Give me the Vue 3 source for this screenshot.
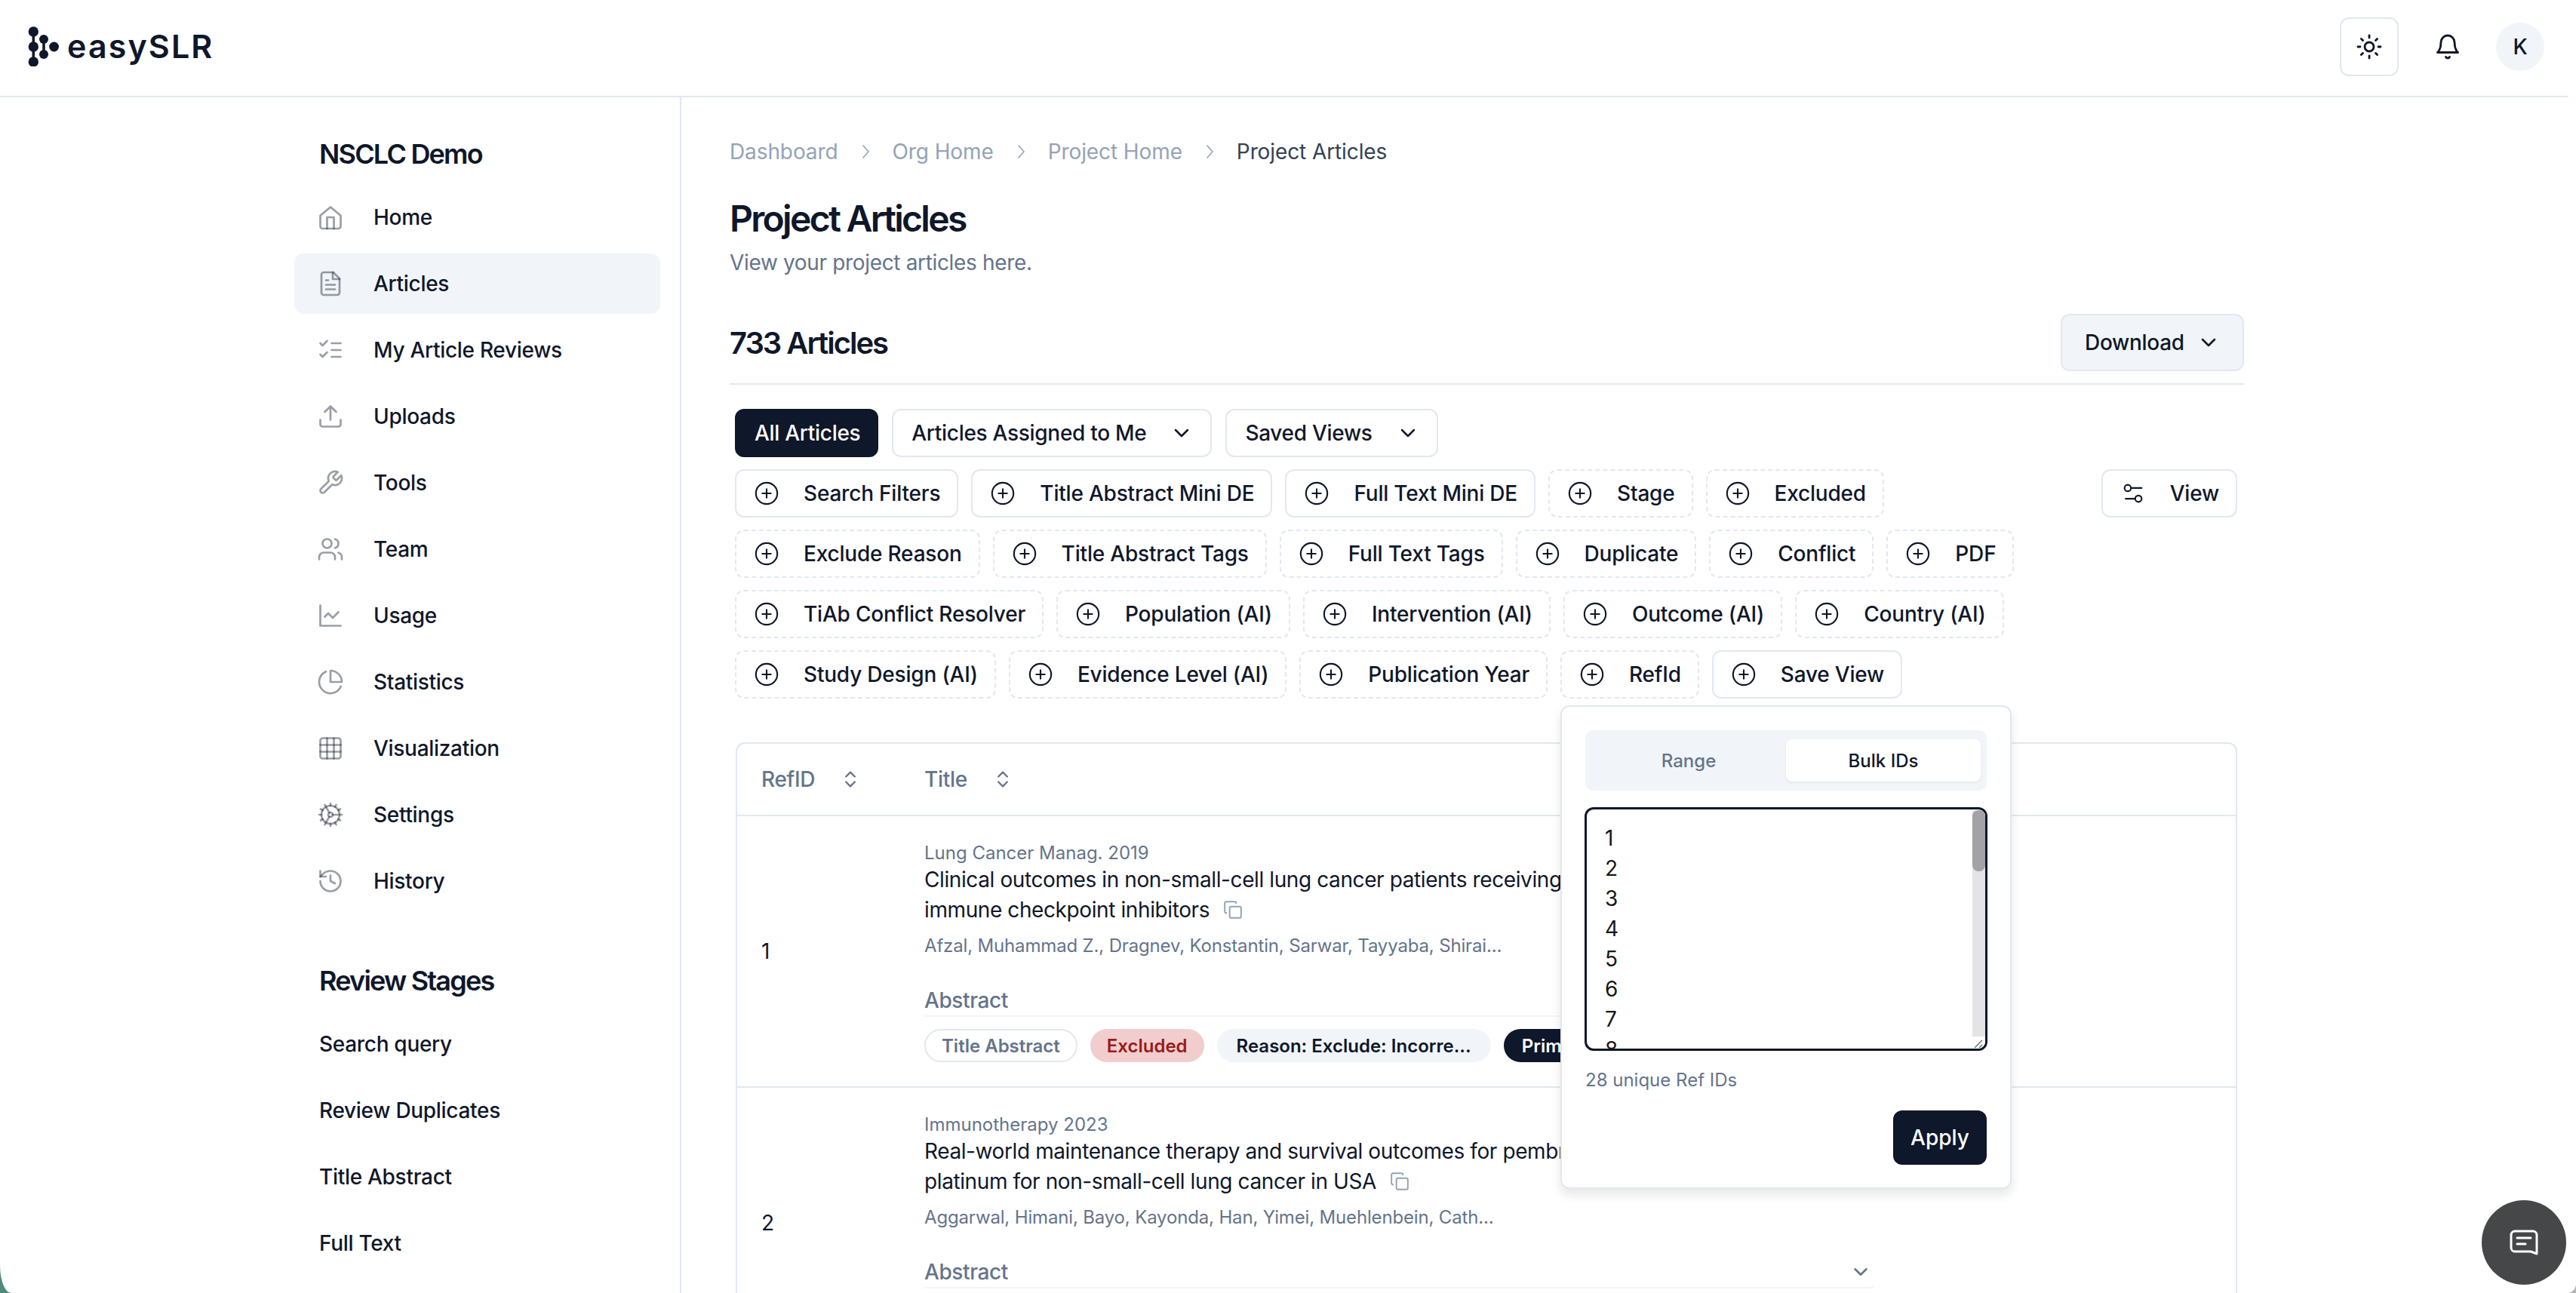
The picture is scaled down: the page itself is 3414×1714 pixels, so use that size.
<script setup>
const navItems = [
  { label: 'Home', icon: 'home' },
  { label: 'Articles', icon: 'file', active: true },
  { label: 'My Article Reviews', icon: 'checks' },
  { label: 'Uploads', icon: 'upload' },
  { label: 'Tools', icon: 'wrench' },
  { label: 'Team', icon: 'users' },
  { label: 'Usage', icon: 'chart' },
  { label: 'Statistics', icon: 'pie' },
  { label: 'Visualization', icon: 'grid' },
  { label: 'Settings', icon: 'cog' },
  { label: 'History', icon: 'history' },
]
const stages = ['Search query', 'Review Duplicates', 'Title Abstract', 'Full Text']
const crumbs = ['Dashboard', 'Org Home', 'Project Home']
const filters = [
  { label: 'Search Filters', solid: true },
  { label: 'Title Abstract Mini DE', solid: true },
  { label: 'Full Text Mini DE', solid: true },
  { label: 'Stage' },
  { label: 'Excluded' },
  { label: 'Exclude Reason' },
  { label: 'Title Abstract Tags' },
  { label: 'Full Text Tags' },
  { label: 'Duplicate' },
  { label: 'Conflict' },
  { label: 'PDF' },
  { label: 'TiAb Conflict Resolver' },
  { label: 'Population (AI)' },
  { label: 'Intervention (AI)' },
  { label: 'Outcome (AI)' },
  { label: 'Country (AI)' },
  { label: 'Study Design (AI)' },
  { label: 'Evidence Level (AI)' },
  { label: 'Publication Year' },
  { label: 'RefId' },
  { label: 'Save View', solid: true },
]
const rows = [
  {
    id: 1,
    journal: 'Lung Cancer Manag. 2019',
    line1: 'Clinical outcomes in non-small-cell lung cancer patients receiving',
    line2: 'immune checkpoint inhibitors',
    authors: 'Afzal, Muhammad Z., Dragnev, Konstantin, Sarwar, Tayyaba, Shirai...',
    badges: true,
  },
  {
    id: 2,
    journal: 'Immunotherapy 2023',
    line1: 'Real-world maintenance therapy and survival outcomes for pembrolizumab',
    line2: 'platinum for non-small-cell lung cancer in USA',
    authors: 'Aggarwal, Himani, Bayo, Kayonda, Han, Yimei, Muehlenbein, Cath...',
    badges: false,
  },
]
const ids = [1, 2, 3, 4, 5, 6, 7, 8]
</script>

<template>
  <div class="app">
    <header class="topbar">
      <div class="logo">
        <svg class="logo-mark" width="41" height="53" viewBox="0 0 41 53" fill="#0f172a">
          <path d="M7.3 7V47" stroke="#0f172a" stroke-width="3.5" />
          <path d="M21 17V37" stroke="#0f172a" stroke-width="3.5" />
          <circle cx="7.3" cy="7" r="6.7" />
          <circle cx="7.3" cy="27" r="6.7" />
          <circle cx="7.3" cy="47" r="6.7" />
          <circle cx="21" cy="17" r="6" />
          <circle cx="21" cy="37" r="6" />
          <circle cx="34.6" cy="27" r="6.4" />
        </svg>
        <span class="logo-text">easySLR</span>
      </div>
      <div class="top-actions">
        <button class="theme-btn">
          <svg class="ico dark" width="36" height="36" viewBox="0 0 24 24">
            <circle cx="12" cy="12" r="4" />
            <path d="M12 2v2M12 20v2M4.93 4.93l1.41 1.41M17.66 17.66l1.41 1.41M2 12h2M20 12h2M6.34 17.66l-1.41 1.41M19.07 4.93l-1.41 1.41" />
          </svg>
        </button>
        <svg class="ico dark bell" width="36" height="36" viewBox="0 0 24 24">
          <path d="M6 8a6 6 0 0 1 12 0c0 7 3 9 3 9H3s3-2 3-9" />
          <path d="M10.3 21a1.94 1.94 0 0 0 3.4 0" />
        </svg>
        <div class="avatar">K</div>
      </div>
    </header>

    <div class="body">
      <aside class="sidebar">
        <h2 class="side-title">NSCLC Demo</h2>
        <nav class="nav">
          <a v-for="item in navItems" :key="item.label" class="nav-item" :class="{ active: item.active }">
            <svg class="ico gray" width="36" height="36" viewBox="0 0 24 24">
              <template v-if="item.icon === 'home'">
                <path d="M3 10.5 12 3l9 7.5V20a2 2 0 0 1-2 2H5a2 2 0 0 1-2-2z" /><path d="M9 22V12h6v10" />
              </template>
              <template v-else-if="item.icon === 'file'">
                <path d="M14.5 2H6a2 2 0 0 0-2 2v16a2 2 0 0 0 2 2h12a2 2 0 0 0 2-2V7.5z" /><path d="M14 2v6h6" /><path d="M16 13H8" /><path d="M16 17H8" /><path d="M10 9H8" />
              </template>
              <template v-else-if="item.icon === 'checks'">
                <path d="m3 6 2 2 4-4M3 16l2 2 4-4" /><path d="M13 6h8M13 12h8M13 18h8" />
              </template>
              <template v-else-if="item.icon === 'upload'">
                <path d="M21 15v4a2 2 0 0 1-2 2H5a2 2 0 0 1-2-2v-4" /><path d="M17 8l-5-5-5 5M12 3v12" />
              </template>
              <template v-else-if="item.icon === 'wrench'">
                <path d="M14.7 6.3a1 1 0 0 0 0 1.4l1.6 1.6a1 1 0 0 0 1.4 0l3.77-3.77a6 6 0 0 1-7.94 7.94l-6.91 6.91a2.12 2.12 0 0 1-3-3l6.91-6.91a6 6 0 0 1 7.94-7.94l-3.76 3.76z" />
              </template>
              <template v-else-if="item.icon === 'users'">
                <path d="M16 21v-2a4 4 0 0 0-4-4H6a4 4 0 0 0-4 4v2" /><circle cx="9" cy="7" r="4" /><path d="M22 21v-2a4 4 0 0 0-3-3.87M16 3.13a4 4 0 0 1 0 7.75" />
              </template>
              <template v-else-if="item.icon === 'chart'">
                <path d="M3 3v18h18" /><path d="m19 9-5 5-4-4-3 3" />
              </template>
              <template v-else-if="item.icon === 'pie'">
                <path d="M21.21 15.89A10 10 0 1 1 8 2.83" /><path d="M22 12A10 10 0 0 0 12 2v10z" />
              </template>
              <template v-else-if="item.icon === 'grid'">
                <rect x="3" y="3" width="18" height="18" rx="2" /><path d="M9 3v18" /><path d="M15 3v18" /><path d="M3 9h18" /><path d="M3 15h18" />
              </template>
              <template v-else-if="item.icon === 'cog'">
                <circle cx="12" cy="12" r="8" /><circle cx="12" cy="12" r="2" />
                <path d="M12 2v2M12 22v-2M17 20.66l-1-1.73M11 10.27 7 3.34M20.66 17l-1.73-1M3.34 7l1.73 1M14 12h8M2 12h2M20.66 7l-1.73 1M3.34 17l1.73-1M17 3.34l-1 1.73M11 13.73l-4 6.93" />
              </template>
              <template v-else-if="item.icon === 'history'">
                <path d="M3 12a9 9 0 1 0 9-9 9.75 9.75 0 0 0-6.74 2.74L3 8" /><path d="M3 3v5h5" /><path d="M12 7v5l4 2" />
              </template>
            </svg>
            <span>{{ item.label }}</span>
          </a>
        </nav>
        <h2 class="side-title stages-title">Review Stages</h2>
        <nav class="nav">
          <a v-for="s in stages" :key="s" class="nav-item plain">{{ s }}</a>
        </nav>
      </aside>

      <main class="main">
        <div class="crumbs">
          <template v-for="c in crumbs" :key="c">
            <span class="crumb">{{ c }}</span>
            <svg class="ico crumb-sep" width="24" height="24" viewBox="0 0 24 24"><path d="m9 4 7 8-7 8" /></svg>
          </template>
          <span class="crumb current">Project Articles</span>
        </div>
        <h1 class="page-title">Project Articles</h1>
        <p class="page-sub">View your project articles here.</p>

        <div class="count-row">
          <h2 class="count">733 Articles</h2>
          <button class="download">
            Download
            <svg class="ico dark chev" width="32" height="32" viewBox="0 0 24 24"><path d="m6 9 6 6 6-6" /></svg>
          </button>
        </div>

        <section class="content">
          <div class="tabs">
            <button class="tab primary">All Articles</button>
            <button class="tab">
              Articles Assigned to Me
              <svg class="ico dark chev" width="32" height="32" viewBox="0 0 24 24"><path d="m6 9 6 6 6-6" /></svg>
            </button>
            <button class="tab">
              Saved Views
              <svg class="ico dark chev" width="32" height="32" viewBox="0 0 24 24"><path d="m6 9 6 6 6-6" /></svg>
            </button>
          </div>

          <div class="filter-area">
            <div class="filters">
              <button v-for="f in filters" :key="f.label" class="chip" :class="{ solid: f.solid }">
                <svg class="ico dark plus" width="34" height="34" viewBox="0 0 24 24">
                  <circle cx="12" cy="12" r="10" /><path d="M8 12h8M12 8v8" />
                </svg>
                {{ f.label }}
              </button>
            </div>
            <button class="chip solid view-btn">
              <svg class="ico dark plus" width="34" height="34" viewBox="0 0 24 24">
                <path d="M20 7h-9M14 17H5" /><circle cx="17" cy="17" r="3" /><circle cx="7" cy="7" r="3" />
              </svg>
              View
            </button>

            <div class="popover">
              <div class="seg">
                <div class="seg-item">Range</div>
                <div class="seg-item on">Bulk IDs</div>
              </div>
              <div class="idbox">
                <div v-for="n in ids" :key="n" class="idline">{{ n }}</div>
                <div class="sb-track"><div class="sb-thumb"></div></div>
                <svg class="grip" width="18" height="16" viewBox="0 0 18 16"><path d="M4 15 14 5M10 15l4-4" /></svg>
              </div>
              <div class="unique">28 unique Ref IDs</div>
              <div class="apply-row"><button class="apply">Apply</button></div>
            </div>
          </div>

          <div class="table">
            <div class="thead">
              <div class="col-id th">
                RefID
                <svg class="ico slate" width="28" height="28" viewBox="0 0 24 24"><path d="m7 15 5 5 5-5M7 9l5-5 5 5" /></svg>
              </div>
              <div class="col-title th">
                Title
                <svg class="ico slate" width="28" height="28" viewBox="0 0 24 24"><path d="m7 15 5 5 5-5M7 9l5-5 5 5" /></svg>
              </div>
            </div>
            <div v-for="r in rows" :key="r.id" class="row">
              <div class="col-id num">{{ r.id }}</div>
              <div class="col-title cell">
                <div class="journal">{{ r.journal }}</div>
                <div class="art-title">{{ r.line1 }}</div>
                <div class="art-title">
                  {{ r.line2 }}
                  <svg class="ico copy" width="26" height="26" viewBox="0 0 24 24">
                    <rect x="8" y="8" width="14" height="14" rx="2" /><path d="M4 16c-1.1 0-2-.9-2-2V4c0-1.1.9-2 2-2h10c1.1 0 2 .9 2 2" />
                  </svg>
                </div>
                <div class="authors">{{ r.authors }}</div>
                <div class="abstract">
                  <span>Abstract</span>
                  <svg class="ico slate" width="30" height="30" viewBox="0 0 24 24"><path d="m6 9 6 6 6-6" /></svg>
                </div>
                <div class="badges">
                  <template v-if="r.badges">
                    <span class="badge outline">Title Abstract</span>
                    <span class="badge red">Excluded</span>
                    <span class="badge soft">Reason: Exclude: Incorre...</span>
                    <span class="badge ink">Primary</span>
                  </template>
                </div>
              </div>
            </div>
          </div>
        </section>
      </main>
    </div>

    <button class="chat">
      <svg width="38" height="34" viewBox="0 0 38 34" fill="none" stroke="#fff" stroke-width="3" stroke-linejoin="round" stroke-linecap="round">
        <path d="M7 2h24a5 5 0 0 1 5 5v25l-8-3H7a5 5 0 0 1-5-5V7a5 5 0 0 1 5-5z" />
        <path d="M10 11h18M10 19h11" />
      </svg>
    </button>
  </div>
</template>

<style>
html, body {
  margin: 0;
  background: linear-gradient(90deg, #4f8a7a 0 50%, #b4b4b4 50% 100%);
}
</style>

<style scoped>
* { box-sizing: border-box; }
.app {
  position: relative;
  width: 3414px;
  height: 1714px;
  overflow: hidden;
  background: #fff;
  color: #0f172a;
  font-family: Inter, "Liberation Sans", sans-serif;
  font-size: 28px;
  letter-spacing: -0.3px;
  border-radius: 0 0 12px 15px / 0 0 12px 37px;
}
button { font-family: inherit; font-size: inherit; color: inherit; background: none; cursor: pointer; letter-spacing: inherit; }
h1, h2, p { margin: 0; }
.ico { fill: none; stroke-linecap: round; stroke-linejoin: round; stroke-width: 2; flex: none; }
.ico.dark { stroke: #0f172a; }
.ico.gray { stroke: #0f172a; stroke-opacity: 0.42; stroke-width: 1.8; }
.ico.slate { stroke: #64748b; }
.ico.chev { stroke-width: 1.9; margin: 0 -2px; }
.ico.plus { stroke-width: 1.5; margin: 0 -2px; }

.topbar {
  width: 3404px;
  height: 129px;
  border-bottom: 2px solid #e2e8f0;
  display: flex;
  align-items: center;
  justify-content: space-between;
  padding: 0 32px 4px 37px;
}
.logo { display: flex; align-items: center; gap: 11px; }
.logo-text { font-size: 43px; font-weight: 600; letter-spacing: 2.1px; line-height: 53px; }
.top-actions { display: flex; align-items: center; }
.theme-btn {
  width: 78px; height: 78px;
  border: 2px solid #e2e8f0; border-radius: 12px;
  display: flex; align-items: center; justify-content: center;
  padding: 0;
}
.theme-btn .ico, .bell { stroke-width: 1.9; }
.bell { margin-left: 47px; }
.avatar {
  width: 64px; height: 64px; border-radius: 50%;
  background: #f1f5f9; margin-left: 46px;
  display: flex; align-items: center; justify-content: center;
  font-size: 28px; font-weight: 500;
}

.body { display: flex; height: 1585px; }
.sidebar {
  width: 903px;
  flex: none;
  border-right: 2px solid #e2e8f0;
  padding: 51px 26px 0 390px;
}
.side-title {
  font-size: 36px; font-weight: 600; letter-spacing: -1.8px;
  line-height: 48px; padding-left: 33px; margin-bottom: 20px;
}
.stages-title { margin-top: 68px; }
.nav { display: flex; flex-direction: column; gap: 8px; }
.nav-item {
  height: 80px; display: flex; align-items: center; gap: 39px;
  padding-left: 30px; border-radius: 12px; font-weight: 500;
}
.nav-item.plain { padding-left: 33px; }
.nav-item.active { background: #f1f5f9; }

.main { flex: 1; padding: 52px 440px 0 64px; min-width: 0; }
.crumbs { display: flex; align-items: center; height: 40px; color: #94a3b8; letter-spacing: -0.1px; }
.crumb-sep { stroke: #94a3b8; margin: 0 24px; stroke-width: 1.6; }
.crumb.current { color: #334155; }
.page-title {
  font-size: 48px; font-weight: 600; letter-spacing: -2.7px;
  line-height: 60px; margin-top: 39px;
}
.page-sub { color: #64748b; line-height: 40px; margin-top: 8px; letter-spacing: -0.34px; }
.count-row {
  display: flex; align-items: center; justify-content: space-between;
  margin-top: 48px; padding-bottom: 16px; border-bottom: 2px solid #e2e8f0;
}
.count { font-size: 40px; font-weight: 600; letter-spacing: -2px; }
.download {
  height: 76px; width: 243px;
  background: #f1f5f9; border: 2px solid #e2e8f0; border-radius: 12px;
  display: flex; align-items: center; gap: 18px;
  font-weight: 500; padding: 0 0 0 30px;
}

.content { padding: 32px 9px 0 7px; }
.tabs { display: flex; gap: 18px; }
.tab {
  height: 64px; display: flex; align-items: center; gap: 33px;
  padding: 0 24px; border: 2px solid #e2e8f0; border-radius: 12px; font-weight: 500;
}
.tab.primary { background: #0f172a; border-color: #0f172a; color: #fff; padding: 0 22px 0 24px; }

.filter-area { position: relative; display: flex; justify-content: space-between; align-items: flex-start; margin-top: 16px; }
.filters { display: flex; flex-wrap: wrap; gap: 16px 17px; width: 1790px; }
.chip {
  height: 64px; display: flex; align-items: center; gap: 34px;
  padding: 0 22px 0 25px; border: 2px dashed #e2e8f0; border-radius: 12px; font-weight: 500;
  letter-spacing: -0.2px;
}
.chip.solid { border-style: solid; }

.popover {
  position: absolute; left: 1094px; top: 313px;
  width: 598px; height: 641px;
  background: #fff; border: 2px solid #e2e8f0; border-radius: 12px;
  box-shadow: 0 8px 14px rgba(15, 23, 42, 0.1);
  padding: 31px 31px 0;
  z-index: 5;
  letter-spacing: 0;
}
.seg {
  height: 80px; background: #f1f5f9; border-radius: 10px;
  display: flex; padding: 12px 8px;
}
.seg-item {
  flex: 1; display: flex; align-items: center; justify-content: center;
  font-size: 24px; font-weight: 500; color: #64748b; border-radius: 8px;
}
.seg-item.on { background: #fff; color: #0f172a; box-shadow: 0 1px 3px rgba(15, 23, 42, 0.08); }
.idbox {
  position: relative; height: 323px; margin: 22px -1px 0; overflow: hidden;
  border: 3px solid #0f172a; border-radius: 12px;
  padding: 18px 24px 0;
}
.idline { line-height: 40px; font-size: 28px; color: #171717; }
.sb-track { position: absolute; top: 1px; right: 0; width: 17px; height: 304px; background: #e4e4e6; }
.sb-thumb { width: 17px; height: 81px; background: #a3a3a5; border-radius: 8px; }
.grip { position: absolute; right: 0; bottom: 0; fill: none; stroke: #666; stroke-width: 1.4; background: #fff; }
.unique { font-size: 24px; color: #64748b; line-height: 32px; margin-top: 23px; }
.apply-row { display: flex; justify-content: flex-end; margin-top: 24px; }
.apply {
  width: 124px; height: 72px; background: #0f172a; color: #fff; border: 0;
  border-radius: 12px; font-weight: 500; padding: 0;
}

.table {
  margin-top: 58px; margin-left: 1px;
  border: 2px solid #e2e8f0; border-bottom: 0;
  border-radius: 12px 12px 0 0;
}
.thead { display: flex; height: 96px; border-bottom: 2px solid #e2e8f0; align-items: center; }
.col-id { width: 248px; flex: none; padding-left: 32px; }
.col-title { flex: 1; min-width: 0; }
.th { display: flex; align-items: center; color: #64748b; font-weight: 500; }
.col-id.th { gap: 33px; }
.col-title.th { gap: 33px; }
.row { display: flex; align-items: center; border-bottom: 2px solid #e2e8f0; padding: 33px 0 32px; }
.num { position: relative; top: -1px; }
.journal, .authors { font-size: 24px; color: #64748b; letter-spacing: 0; }
.journal { line-height: 31px; }
.authors { line-height: 32px; margin-top: 12px; letter-spacing: -0.16px; }
.art-title { line-height: 40px; white-space: nowrap; display: flex; align-items: center; gap: 18px; letter-spacing: -0.4px; }
.copy { stroke: #94a3b8; stroke-width: 1.8; }
.abstract {
  width: 1258px; height: 42px; margin-top: 36px;
  border-bottom: 2px solid #f1f5f9;
  display: flex; justify-content: space-between; align-items: center;
  color: #64748b; font-weight: 500; padding-right: 2px; letter-spacing: -0.4px;
}
.badges { display: flex; gap: 17px; margin-top: 16px; min-height: 44px; }
.badge {
  height: 44px; border-radius: 22px; display: flex; align-items: center;
  padding: 0 22px; font-size: 24px; font-weight: 600; white-space: nowrap; letter-spacing: 0;
}
.badge.outline { border: 2px solid #e2e8f0; color: #64748b; padding: 0 21px; }
.badge.red { background: #f2cdcd; color: #991b1b; }
.badge.soft { background: #f1f5f9; color: #0f172a; padding: 0 26px; }
.badge.ink { background: #0f172a; color: #fff; padding: 0 24px; }

.chat {
  position: absolute; right: 13px; bottom: 11px;
  width: 112px; height: 112px; border-radius: 50%;
  background: #464749; border: 0; padding: 0;
  display: flex; align-items: center; justify-content: center;
}
</style>
